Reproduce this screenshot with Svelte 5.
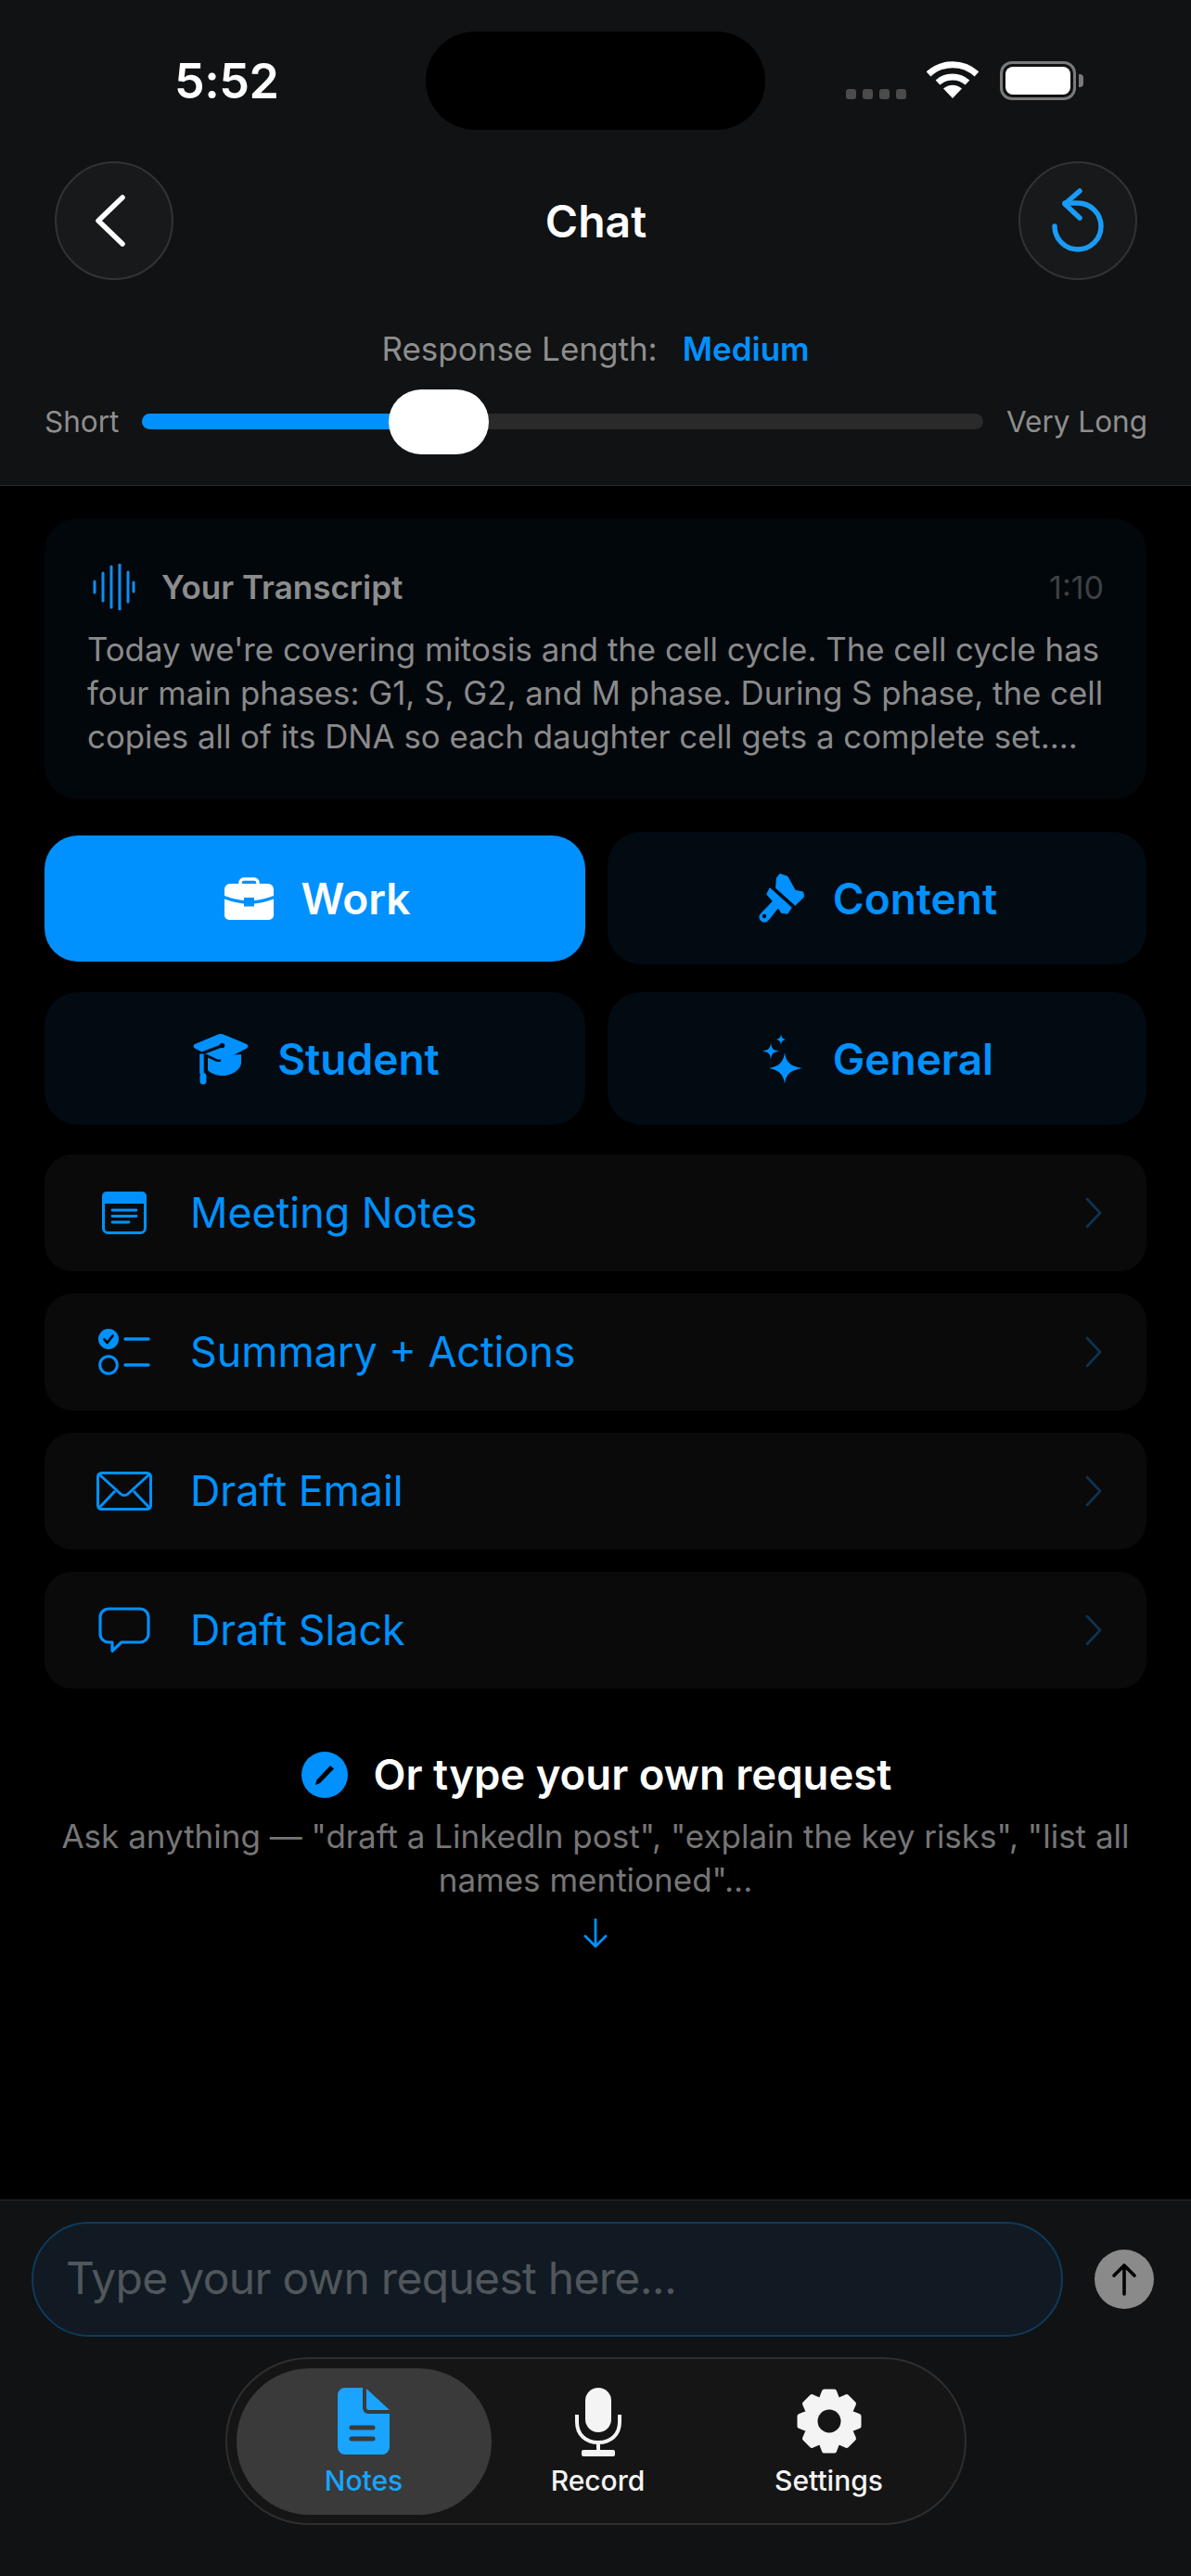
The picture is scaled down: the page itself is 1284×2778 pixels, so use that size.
<script>
  // slider position, 0..1 along the track
  let lengthValue = $state(0.352);
  let mode = $state('Work');
  let tab = $state('Notes');

  // eight-tooth gear outline, centred on cx,cy
  function gearPath(cx, cy, outer, root) {
    const pts = [];
    for (let i = 0; i < 8; i++) {
      const a = (i * Math.PI) / 4 - Math.PI / 2;
      for (const [off, r] of [[-0.36, root], [-0.17, outer], [0.17, outer], [0.36, root]]) {
        pts.push(`${(cx + r * Math.cos(a + off)).toFixed(1)} ${(cy + r * Math.sin(a + off)).toFixed(1)}`);
      }
    }
    return 'M' + pts.join('L') + 'Z';
  }
</script>

{#snippet briefcase()}
  <svg class="ico" width="53" height="46" viewBox="0 0 53 46">
    <path d="M17 9V6a4 4 0 0 1 4-4h11a4 4 0 0 1 4 4v3" fill="none" stroke="currentColor" stroke-width="3.5"/>
    <path d="M6 7h41a6 6 0 0 1 6 6v7c-8 3-15 4.500-21 5v-3h-11v3c-6-.5-13-2-21-5v-7a6 6 0 0 1 6-6z" fill="currentColor"/>
    <path d="M0 23.500c8 3 15 4.500 21 5v3h11v-3c6-.5 13-2 21-5V41a5 5 0 0 1-5 5H5a5 5 0 0 1-5-5z" fill="currentColor"/>
  </svg>
{/snippet}

{#snippet brush()}
  <svg class="ico" width="50" height="53" viewBox="0 0 50 53">
    <path d="M22.700.5L31 3.300l8.300 15 8.400 1.700 1 5-9.400 9.300-20.600-18.600.6-10.700z" fill="currentColor" stroke="currentColor" stroke-width="1" stroke-linejoin="round"/>
    <path d="M12 15.700l23.300 21-4.300 6.600-6.700-1-3.300-5.600L10.500 50a5.300 5.300 0 1 1-7.500-7.300l12.300-12.700-6.600-7.700z" fill="currentColor" stroke="currentColor" stroke-width="1" stroke-linejoin="round"/>
    <circle cx="6" cy="46" r="2.200" fill="#020a12"/>
  </svg>
{/snippet}

{#snippet cap()}
  <svg class="ico" width="62" height="56" viewBox="0 0 62 56">
    <path d="M17 26v14c4 4 10 6 16 6 9 0 20-6 20-14v-9z" fill="currentColor"/>
    <path d="M27 2a9 9 0 0 1 8 0l24 10a2.500 2.500 0 0 1 0 4.500L35 29a9 9 0 0 1-8 0L3 16.500A2.500 2.500 0 0 1 3 12z" fill="currentColor"/>
    <path d="M31 29.500a10 10 0 0 1-4.500 0L15 24" fill="none" stroke="#020a12" stroke-width="2.500"/>
    <path d="M33 13.500l-21 8" fill="none" stroke="#020a12" stroke-width="3" stroke-linecap="round"/>
    <circle cx="32.500" cy="13.500" r="2.800" fill="#020a12"/>
    <path d="M10.500 22.500V44" stroke="currentColor" stroke-width="4.500"/>
    <rect x="8.500" y="43" width="7" height="12.500" rx="3.500" fill="currentColor"/>
  </svg>
{/snippet}

{#snippet sparkles()}
  <svg class="ico" width="46" height="54" viewBox="0 0 46 54">
    <path d="M20 0c.6 4 1.500 5 5 6-3.500 1-4.400 2-5 6-.6-4-1.500-5-5-6 3.500-1 4.400-2 5-6z" fill="currentColor"/>
    <path d="M9 10c1 6 2.500 7.500 9 8.500-6.500 1-8 2.500-9 8.500-1-6-2.500-7.500-9-8.500 6.500-1 8-2.500 9-8.500z" fill="currentColor"/>
    <path d="M24 20c1.500 10 5 14.500 19 17-14 2.500-17.500 7-19 17-1.500-10-5-14.500-17-17 12-2.500 15.500-7 17-17z" fill="currentColor"/>
  </svg>
{/snippet}

{#snippet notesIcon()}
  <svg width="48" height="46" viewBox="0 0 48 46">
    <path d="M5 0h38a5 5 0 0 1 5 5v8H0V5a5 5 0 0 1 5-5z" fill="currentColor"/>
    <rect x="1.500" y="5" width="45" height="39.500" rx="5" fill="none" stroke="currentColor" stroke-width="3"/>
    <path d="M11 20h26M11 26.500h26M11 33h18" fill="none" stroke="currentColor" stroke-width="2.800" stroke-linecap="round"/>
  </svg>
{/snippet}

{#snippet actionsIcon()}
  <svg width="56" height="50" viewBox="0 0 56 50">
    <circle cx="11" cy="11" r="11" fill="currentColor"/>
    <path d="M6.500 11.500l3.200 3.500 5.800-7.500" fill="none" stroke="#0a0a0a" stroke-width="2.800" stroke-linecap="round" stroke-linejoin="round"/>
    <circle cx="11" cy="39" r="9.300" fill="none" stroke="currentColor" stroke-width="3"/>
    <path d="M29 11h25M29 39h25" fill="none" stroke="currentColor" stroke-width="3.500" stroke-linecap="round"/>
  </svg>
{/snippet}

{#snippet mailIcon()}
  <svg width="60" height="42" viewBox="0 0 60 42">
    <rect x="1.500" y="1.500" width="57" height="39" rx="4" fill="none" stroke="currentColor" stroke-width="3"/>
    <path d="M3 3l23 21a6 6 0 0 0 8 0L57 3M3 39l17-18M57 39L40 21" fill="none" stroke="currentColor" stroke-width="3"/>
  </svg>
{/snippet}

{#snippet bubbleIcon()}
  <svg width="56" height="50" viewBox="0 0 56 50">
    <path d="M11 2h34a9 9 0 0 1 9 9v18a9 9 0 0 1-9 9H25L15 47.500V38h-4a9 9 0 0 1-9-9V11a9 9 0 0 1 9-9z" fill="none" stroke="currentColor" stroke-width="3.200" stroke-linejoin="round"/>
  </svg>
{/snippet}

{#snippet modeBtn(label, icon)}
  <button class="mode" class:active={mode === label} onclick={() => (mode = label)}>
    {@render icon()}
    <span>{label}</span>
  </button>
{/snippet}

{#snippet row(label, icon)}
  <button class="row">
    <span class="row-icon">{@render icon()}</span>
    <span class="row-label">{label}</span>
    <svg class="chev" width="20" height="36" viewBox="0 0 20 36">
      <path d="M4 3l14 15L4 33" fill="none" stroke="currentColor" stroke-width="2.600" stroke-linecap="round" stroke-linejoin="round"/>
    </svg>
  </button>
{/snippet}

<div class="screen">
  <header class="top">
    <div class="status">
      <span class="time">5:52</span>
      <div class="island"></div>
      <div class="status-right">
        <div class="dots"><i></i><i></i><i></i><i></i></div>
        <svg width="56" height="40" viewBox="0 0 56 40">
          <path d="M2 14a38 38 0 0 1 52 0" fill="none" stroke="#fff" stroke-width="7"/>
          <path d="M12 23a24 24 0 0 1 32 0" fill="none" stroke="#fff" stroke-width="7"/>
          <path d="M18 29.500a15 15 0 0 1 20 0L28 40z" fill="#fff"/>
        </svg>
        <div class="battery"><div class="battery-fill"></div></div>
        <div class="battery-cap"></div>
      </div>
    </div>

    <nav class="bar">
      <button class="round" aria-label="Back">
        <svg class="back" width="36" height="56" viewBox="0 0 36 56">
          <path d="M31 3L5 28l26 25" fill="none" stroke="#fff" stroke-width="5.500" stroke-linecap="round" stroke-linejoin="round"/>
        </svg>
      </button>
      <h1>Chat</h1>
      <button class="round" aria-label="Reset">
        <svg width="60" height="72" viewBox="0 0 60 72">
          <path d="M5 42a25 25 0 1 0 25-25H16" fill="none" stroke="#1a9bf5" stroke-width="5.500" stroke-linecap="round"/>
          <path d="M32 4L16 18l16 15" fill="none" stroke="#1a9bf5" stroke-width="5.500" stroke-linecap="round" stroke-linejoin="round"/>
        </svg>
      </button>
    </nav>

    <div class="length-label">Response Length:<b>Medium</b></div>
    <div class="slider">
      <span>Short</span>
      <div class="track">
        <div class="fill" style="width: {lengthValue * 100}%"></div>
        <div class="thumb" style="left: {lengthValue * 100}%"></div>
      </div>
      <span>Very Long</span>
    </div>
  </header>

  <main>
    <section class="transcript">
      <div class="transcript-head">
        <svg width="46" height="50" viewBox="0 0 46 50">
          <path d="M2 19v12M11 10v30M20 3v44M29 0v50M38 9v32M44 20v10" fill="none" stroke="#0d8ff0" stroke-width="3" stroke-linecap="round"/>
        </svg>
        <strong>Your Transcript</strong>
        <span>1:10</span>
      </div>
      <p>Today we're covering mitosis and the cell cycle. The cell cycle has four main phases: G1, S, G2, and M phase. During S phase, the cell copies all of its DNA so each daughter cell gets a complete set....</p>
    </section>

    <div class="modes">
      {@render modeBtn('Work', briefcase)}
      {@render modeBtn('Content', brush)}
      {@render modeBtn('Student', cap)}
      {@render modeBtn('General', sparkles)}
    </div>

    <div class="rows">
      {@render row('Meeting Notes', notesIcon)}
      {@render row('Summary + Actions', actionsIcon)}
      {@render row('Draft Email', mailIcon)}
      {@render row('Draft Slack', bubbleIcon)}
    </div>

    <div class="own">
      <h2>
        <svg width="50" height="50" viewBox="0 0 50 50">
          <circle cx="25" cy="25" r="25" fill="#0091ff"/>
          <path d="M15 36l1.500-5.500L31 15l4 3.500L20 34z" fill="#000"/>
        </svg>
        Or type your own request
      </h2>
      <p>Ask anything — "draft a LinkedIn post", "explain the key risks", "list all names mentioned"...</p>
      <svg class="down" width="28" height="32" viewBox="0 0 28 32">
        <path d="M14 1v29M3 19l11 11 11-11" fill="none" stroke="#0091ff" stroke-width="2.800" stroke-linecap="round" stroke-linejoin="round"/>
      </svg>
    </div>
  </main>

  <footer>
    <div class="composer">
      <input type="text" placeholder="Type your own request here..." />
      <button class="send" aria-label="Send">
        <svg width="30" height="36" viewBox="0 0 30 36">
          <path d="M15 34V3M4 14L15 3l11 11" fill="none" stroke="#000" stroke-width="3.600" stroke-linecap="round" stroke-linejoin="round"/>
        </svg>
      </button>
    </div>

    <div class="tabs">
      <button class="tab" class:on={tab === 'Notes'} onclick={() => (tab = 'Notes')}>
        <svg width="56" height="74" viewBox="0 0 56 74">
          <path d="M8 0h19v22a6 6 0 0 0 6 6h23v36a8 8 0 0 1-8 8H8a8 8 0 0 1-8-8V8a8 8 0 0 1 8-8z" fill="currentColor"/>
          <path d="M31 1l25 23H34a3 3 0 0 1-3-3z" fill="currentColor"/>
          <path d="M15 43h23M15 55h23" stroke="#3a3a3a" stroke-width="5" stroke-linecap="round"/>
        </svg>
        <span>Notes</span>
      </button>
      <button class="tab record" class:on={tab === 'Record'} onclick={() => (tab = 'Record')}>
        <svg width="50" height="74" viewBox="0 0 50 74">
          <rect x="11" y="0" width="28" height="48" rx="14" fill="currentColor"/>
          <path d="M2 29v8c0 14 10 22 23 22s23-8 23-22v-8" fill="none" stroke="currentColor" stroke-width="4"/>
          <path d="M25 59v9" stroke="currentColor" stroke-width="4"/>
          <rect x="7" y="67" width="36" height="7" rx="2" fill="currentColor"/>
        </svg>
        <span>Record</span>
      </button>
      <button class="tab settings" class:on={tab === 'Settings'} onclick={() => (tab = 'Settings')}>
        <svg width="72" height="74" viewBox="0 0 72 74">
          <path d={gearPath(36, 36, 32.500, 25)} fill="currentColor" stroke="currentColor" stroke-width="5" stroke-linejoin="round"/>
          <circle cx="36" cy="36" r="12.500" fill="#151515"/>
        </svg>
        <span>Settings</span>
      </button>
    </div>
  </footer>
</div>

<style>
  :global(body) {
    background: #000;
  }

  .screen {
    width: 1284px;
    height: 2778px;
    display: flex;
    flex-direction: column;
    background: #000;
    color: #fff;
    font-family: Inter, "Liberation Sans", sans-serif;
  }

  button {
    font-family: inherit;
    border: none;
    background: none;
    color: inherit;
    padding: 0;
  }

  .top {
    background: #101213;
    border-bottom: 1px solid #2a2a2a;
    height: 524px;
    box-sizing: border-box;
  }

  .status {
    position: relative;
    height: 174px;
    display: flex;
    justify-content: space-between;
    padding: 64px 118px 0 188px;
    box-sizing: border-box;
  }

  .time {
    font-size: 52px;
    font-weight: 600;
    line-height: 48px;
    letter-spacing: -0.5px;
  }

  .island {
    position: absolute;
    left: 459px;
    top: 34px;
    width: 366px;
    height: 106px;
    border-radius: 53px;
    background: #000;
  }

  .status-right {
    display: flex;
    align-items: flex-start;
    padding-top: 2px;
    position: absolute;
    left: 912px;
    top: 64px;
  }

  .dots {
    display: flex;
    gap: 7px;
    margin: 30px 22px 0 0;
  }

  .dots i {
    width: 11px;
    height: 11px;
    border-radius: 3px;
    background: #4b4b4b;
  }

  .status-right svg {
    margin-right: 23px;
  }

  .battery {
    width: 82px;
    height: 42px;
    box-sizing: border-box;
    border: 3px solid #7a7a7a;
    border-radius: 13px;
    padding: 3px;
    background: #111;
  }

  .battery-fill {
    height: 100%;
    background: #fff;
    border-radius: 8px;
  }

  .battery-cap {
    width: 5px;
    height: 14px;
    margin: 14px 0 0 3px;
    background: #7a7a7a;
    border-radius: 0 4px 4px 0;
  }

  .bar {
    height: 128px;
    padding: 0 58px 0 59px;
    display: flex;
    align-items: center;
    justify-content: space-between;
  }

  .round {
    width: 128px;
    height: 128px;
    box-sizing: border-box;
    border-radius: 50%;
    border: 2px solid #333;
    background: #17191a;
    display: flex;
    align-items: center;
    justify-content: center;
  }

  .back {
    margin-right: 8px;
  }

  .bar h1 {
    margin: 0;
    font-size: 48px;
    font-weight: 600;
  }

  .length-label {
    margin-top: 54px;
    height: 40px;
    line-height: 40px;
    font-size: 35px;
    color: #8e8e8e;
    text-align: center;
  }

  .length-label b {
    margin-left: 27px;
    color: #0091ff;
    font-weight: 600;
  }

  .slider {
    margin-top: 23px;
    height: 70px;
    padding: 0 47px 0 48px;
    display: flex;
    align-items: center;
    gap: 25px;
    font-size: 31.500px;
    color: #8e8e8e;
  }

  .track {
    position: relative;
    flex: 1;
    height: 17px;
    border-radius: 9px;
    background: #2a2a2a;
  }

  .fill {
    height: 100%;
    border-radius: 9px;
    background: #0091ff;
  }

  .thumb {
    position: absolute;
    top: calc(50% + 1px);
    width: 108px;
    height: 70px;
    transform: translate(-50%, -50%);
    border-radius: 35px;
    background: #fff;
  }

  main {
    flex: 1;
    padding: 35px 48px 0;
  }

  .transcript {
    height: 303px;
    box-sizing: border-box;
    padding: 45px 46px 0;
    border-radius: 36px;
    background: #02070c;
  }

  .transcript-head {
    display: flex;
    align-items: center;
    height: 58px;
    font-size: 35px;
  }

  .transcript-head svg {
    margin: 0 28px 0 6px;
  }

  .transcript-head strong {
    flex: 1;
    font-weight: 600;
    color: #8c8c8c;
  }

  .transcript-head span {
    color: #3c4145;
    font-size: 34px;
  }

  .transcript p {
    margin: 15px -6px 0 0;
    font-size: 34.800px;
    line-height: 47px;
    color: #8a8a8a;
  }

  .modes {
    margin-top: 35px;
    display: grid;
    grid-template-columns: 583px 581px;
    grid-auto-rows: 143px;
    column-gap: 24px;
    row-gap: 30px;
  }

  .mode {
    display: flex;
    align-items: center;
    justify-content: center;
    gap: 30px;
    padding-left: 2px;
    border-radius: 36px;
    background: #020a12;
    color: #0091ff;
    font-size: 46px;
    font-weight: 600;
  }

  .mode.active {
    margin: 4px 0 3px;
    padding-left: 5px;
    background: #0091ff;
    color: #fff;
  }

  .rows {
    margin-top: 32px;
    display: flex;
    flex-direction: column;
    gap: 24px;
  }

  .row {
    height: 126px;
    display: flex;
    align-items: center;
    padding: 0 48px 0 56px;
    border-radius: 30px;
    background: #0a0a0a;
    color: #0091ff;
    font-size: 44.800px;
  }

  .row-icon {
    width: 60px;
    margin-right: 41px;
    display: flex;
    justify-content: center;
  }

  .row-label {
    flex: 1;
    text-align: left;
  }

  .chev {
    color: #0c3454;
  }

  .own {
    margin-top: 65px;
    display: flex;
    flex-direction: column;
    align-items: center;
    text-align: center;
  }

  .own h2 {
    margin: 0;
    display: flex;
    align-items: center;
    gap: 28px;
    padding-left: 2px;
    font-size: 45.500px;
    font-weight: 600;
    line-height: 56px;
  }

  .own p {
    margin: 15px 0 0;
    width: 1170px;
    font-size: 35px;
    line-height: 47px;
    color: #767676;
  }

  .down {
    margin-top: 18px;
  }

  footer {
    height: 406px;
    box-sizing: border-box;
    padding-top: 23px;
    background: #101213;
    border-top: 1px solid #2a2a2a;
  }

  .composer {
    display: flex;
    align-items: center;
    padding: 0 40px 0 34px;
    justify-content: space-between;
  }

  .composer input {
    width: 1112px;
    height: 124px;
    box-sizing: border-box;
    padding: 0 35px 4px;
    border: 2px solid #0f3a5c;
    border-radius: 62px;
    background: #111a22;
    color: #fff;
    font-family: inherit;
    font-size: 48px;
    letter-spacing: -0.7px;
    outline: none;
  }

  .composer input::placeholder {
    color: #50565b;
    opacity: 1;
  }

  .send {
    width: 64px;
    height: 64px;
    border-radius: 50%;
    background: #8a8a8a;
    display: flex;
    align-items: center;
    justify-content: center;
  }

  .tabs {
    margin: 22px auto 0;
    width: 799px;
    height: 181px;
    box-sizing: border-box;
    padding: 10px;
    display: flex;
    border: 2px solid #2e2e2e;
    border-radius: 90px;
    background: #151515;
  }

  .tab {
    width: 275px;
    height: 158px;
    display: flex;
    flex-direction: column;
    align-items: center;
    justify-content: flex-start;
    padding-top: 21px;
    gap: 8px;
    border-radius: 79px;
    color: #f4f4f4;
    font-size: 30px;
    font-weight: 500;
  }

  .tab.record {
    width: 230px;
  }

  .tab.settings {
    width: 268px;
  }

  .tab.on {
    background: #3a3a3a;
    color: #19a4ff;
  }
</style>
